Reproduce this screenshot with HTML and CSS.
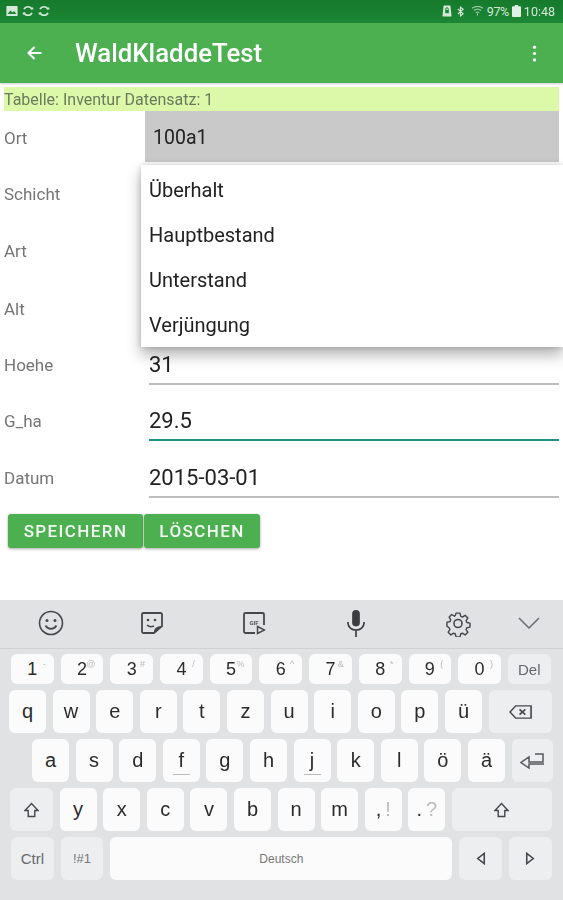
FILE: index.html
```html
<!DOCTYPE html>
<html lang="de">
<head>
<meta charset="utf-8">
<title>WaldKladdeTest</title>
<link rel="stylesheet" href="styles.css">
</head>
<body>
<div class="status">
  <div class="status-left">
    <svg class="si" viewBox="0 0 12 12"><path d="M1 1h10a.6.6 0 0 1 .6.6v8.800a.6.6 0 0 1-.6.6H1a.6.6 0 0 1-.6-.6V1.600A.6.6 0 0 1 1 1z" fill="#d5e8d8"/><path d="M1.500 9l3-3.500 2 2 1.500-1.500L10.500 9z" fill="#1b8432"/></svg>
    <svg class="si" viewBox="0 0 12 12"><path d="M10 4.200A4.500 4.500 0 0 0 2 4.200M2 7.800A4.500 4.500 0 0 0 10 7.800" fill="none" stroke="#d5e8d8" stroke-width="1.700"/><path d="M8.200 4.500h3.300L11 2zM3.800 7.500H.5L1 10z" fill="#d5e8d8"/></svg>
    <svg class="si" viewBox="0 0 12 12"><path d="M10 4.200A4.500 4.500 0 0 0 2 4.200M2 7.800A4.500 4.500 0 0 0 10 7.800" fill="none" stroke="#d5e8d8" stroke-width="1.700"/><path d="M8.200 4.500h3.300L11 2zM3.800 7.500H.5L1 10z" fill="#d5e8d8"/></svg>
  </div>
  <div class="status-right">
    <svg class="si-lock" viewBox="0 0 10 12"><path d="M1.500 1.200a.8.8 0 0 1 .8-.7h5.400a.8.8 0 0 1 .8.700L9.500 11a.6.6 0 0 1-.6.6H1.100a.6.6 0 0 1-.6-.6z" fill="#d5e8d8"/><rect x="3.200" y="5" width="3.600" height="3.200" fill="#1b8432"/><path d="M3.800 5V3.900a1.200 1.200 0 0 1 2.400 0V5" fill="none" stroke="#1b8432"/></svg>
    <svg class="si-bt" viewBox="0 0 8 12"><path d="M1 3.200l6 5.300L4 11V1l3 2.500-6 5.300" fill="none" stroke="#d5e8d8" stroke-width="1.300"/></svg>
    <svg class="si-wifi" viewBox="0 0 14 11"><path d="M1 2.500C4.500-.300 9.500-.300 13 2.500M3 5c2.300-1.800 5.700-1.800 8 0M5 7.400c1.200-.900 2.800-.900 4 0M7 8v2.500" fill="none" stroke="#9cc8a5" stroke-width="1.200"/></svg>
    <span class="pct">97%</span>
    <svg class="si-batt" viewBox="0 0 7 12" preserveAspectRatio="none"><path d="M2.200 0h2.600v1.200H6.300a.7.7 0 0 1 .7.7V11.300a.7.7 0 0 1-.7.7H.7a.7.7 0 0 1-.7-.7V1.900a.7.7 0 0 1 .7-.7H2.200z" fill="#e2efe4"/></svg>
    <span class="time">10:48</span>
  </div>
</div>

<header class="appbar">
  <svg class="back" viewBox="0 0 16 16"><path d="M15 8H2M8 2L2 8l6 6" fill="none" stroke="#fff" stroke-width="2"/></svg>
  <h1 class="title">WaldKladdeTest</h1>
  <svg class="more" viewBox="0 0 4 16"><circle cx="2" cy="2" r="1.500" fill="#fff"/><circle cx="2" cy="8" r="1.500" fill="#fff"/><circle cx="2" cy="14" r="1.500" fill="#fff"/></svg>
</header>

<main class="form">
  <div class="info">Tabelle: Inventur Datensatz: 1</div>
  <div class="row"><span class="label">Ort</span><div class="spinner">100a1</div></div>
  <div class="row"><span class="label">Schicht</span></div>
  <div class="row tall"><span class="label">Art</span></div>
  <div class="row"><span class="label">Alt</span></div>
  <div class="row"><span class="label">Hoehe</span><div class="field">31</div></div>
  <div class="row"><span class="label">G_ha</span><div class="field focus">29.5</div></div>
  <div class="row"><span class="label">Datum</span><div class="field">2015-03-01</div></div>
  <div class="buttons">
    <button class="btn btn-save">SPEICHERN</button>
    <button class="btn btn-del">LÖSCHEN</button>
  </div>
  <ul class="popup">
    <li>Überhalt</li>
    <li>Hauptbestand</li>
    <li>Unterstand</li>
    <li>Verjüngung</li>
  </ul>
</main>

<section class="kbd">
  <div class="tools">
    <svg class="tool t1" viewBox="0 0 26 26"><circle cx="13" cy="13" r="11.500" fill="none" stroke="#45494c" stroke-width="1.600"/><circle cx="9" cy="10.500" r="1.500" fill="#45494c"/><circle cx="17" cy="10.500" r="1.500" fill="#45494c"/><path d="M7.500 15.500c2.500 4.500 8.500 4.500 11 0" fill="none" stroke="#45494c" stroke-width="1.600"/></svg>
    <svg class="tool t2" viewBox="0 0 24 24"><path d="M22 15V3.500A1.500 1.500 0 0 0 20.500 2h-17A1.500 1.500 0 0 0 2 3.500v17A1.500 1.500 0 0 0 3.500 22H14z" fill="none" stroke="#45494c" stroke-width="1.800"/><path d="M22 15l-8 7c-.5-4 2-7 8-7z" fill="#45494c"/><circle cx="8" cy="9" r="1.300" fill="#45494c"/><circle cx="15" cy="9" r="1.300" fill="#45494c"/><path d="M7 14c2 2 4 2.200 7 1" fill="none" stroke="#45494c" stroke-width="1.500"/></svg>
    <svg class="tool t3" viewBox="0 0 24 24"><path d="M13 22H3.500A1.500 1.500 0 0 1 2 20.500v-17A1.500 1.500 0 0 1 3.500 2h17A1.500 1.500 0 0 1 22 3.500V14" fill="none" stroke="#45494c" stroke-width="1.800"/><path d="M15.500 15.500l7 3.500-7 3.500z" fill="none" stroke="#45494c" stroke-width="1.500"/><text x="12" y="14" text-anchor="middle" class="gif">GIF</text></svg>
    <svg class="tool t4" viewBox="0 0 20 28"><rect x="6" y="0" width="8" height="17" rx="4" fill="#3a3d40"/><path d="M1.500 12.500c0 11 17 11 17 0M10 21v7" fill="none" stroke="#3a3d40" stroke-width="1.700"/></svg>
    <svg class="tool t5" viewBox="0 0 26 26"><path d="M10.800 1.500h4.400l.7 3.400 2 .9 3-1.900 3 3.100-1.900 2.900.9 2 3.400.7v4.400l-3.400.7-.9 2 1.900 2.900-3 3.100-3-1.900-2 .9-.7 3.400h-4.400l-.7-3.400-2-.9-3 1.900-3-3.100 1.900-2.900-.9-2L.700 16v-4.400l3.400-.7.9-2L3.100 6 6 3 9 4.900l1.100-.9z" transform="translate(1.300 1.300) scale(.9)" fill="none" stroke="#45494c" stroke-width="1.600" stroke-linejoin="round"/><circle cx="13" cy="13" r="4" fill="none" stroke="#45494c" stroke-width="1.600"/></svg>
    <svg class="tool t6" viewBox="0 0 22 12"><path d="M1 1l10 10L21 1" fill="none" stroke="#6a6e72" stroke-width="1.500"/></svg>
  </div>

  <div class="krow r1">
    <div class="key num">1<sup>-</sup></div>
    <div class="key num">2<sup>@</sup></div>
    <div class="key num">3<sup>#</sup></div>
    <div class="key num">4<sup>/</sup></div>
    <div class="key num">5<sup>%</sup></div>
    <div class="key num">6<sup>^</sup></div>
    <div class="key num">7<sup>&amp;</sup></div>
    <div class="key num">8<sup>*</sup></div>
    <div class="key num">9<sup>(</sup></div>
    <div class="key num">0<sup>)</sup></div>
    <div class="key num fn small-label">Del</div>
  </div>
  <div class="krow r2">
    <div class="key">q</div><div class="key">w</div><div class="key">e</div><div class="key">r</div><div class="key">t</div><div class="key">z</div><div class="key">u</div><div class="key">i</div><div class="key">o</div><div class="key">p</div><div class="key">ü</div>
    <div class="key fn wide-bs"><svg class="ico bs" viewBox="0 0 24 16" preserveAspectRatio="none"><path d="M7 1h16v14H7L1 8z" fill="none" stroke="#45494c" stroke-width="1.700"/><path d="M11 5l6 6M17 5l-6 6" stroke="#45494c" stroke-width="1.700"/></svg></div>
  </div>
  <div class="krow r3">
    <div class="key">a</div><div class="key">s</div><div class="key">d</div><div class="key under">f</div><div class="key">g</div><div class="key">h</div><div class="key under">j</div><div class="key">k</div><div class="key">l</div><div class="key">ö</div><div class="key">ä</div>
    <div class="key fn wide-en"><svg class="ico en" viewBox="0 0 24 16"><path d="M15 1h8v8H9V4L1 9.500 9 15v-4h15" fill="none" stroke="#55595c" stroke-width="1.500"/></svg></div>
  </div>
  <div class="krow r4">
    <div class="key fn wide-sh"><svg class="ico sh" viewBox="0 0 16 16"><path d="M8 1l7 7.500h-3.500V15h-7V8.500H1z" fill="none" stroke="#45494c" stroke-width="1.500"/></svg></div>
    <div class="key">y</div><div class="key">x</div><div class="key">c</div><div class="key">v</div><div class="key">b</div><div class="key">n</div><div class="key">m</div>
    <div class="key">,<span class="alt">!</span></div><div class="key">.<span class="alt">?</span></div>
    <div class="key fn wide-sh2"><svg class="ico sh" viewBox="0 0 16 16"><path d="M8 1l7 7.500h-3.500V15h-7V8.500H1z" fill="none" stroke="#45494c" stroke-width="1.500"/></svg></div>
  </div>
  <div class="krow r5">
    <div class="key fn wide-c small-label">Ctrl</div>
    <div class="key fn wide-c sym">!#1</div>
    <div class="key space">Deutsch</div>
    <div class="key fn wide-c"><svg class="ico ar" viewBox="0 0 10 14"><path d="M8.500 1.500v11L1.500 7z" fill="none" stroke="#45494c" stroke-width="1.700"/></svg></div>
    <div class="key fn wide-c"><svg class="ico ar" viewBox="0 0 10 14"><path d="M1.500 1.500v11L8.500 7z" fill="none" stroke="#45494c" stroke-width="1.700"/></svg></div>
  </div>
</section>
</body>
</html>
```

FILE: styles.css
```css
* { box-sizing: border-box; }
html, body { margin: 0; padding: 0; }
body {
  width: 563px;
  height: 900px;
  overflow: hidden;
  display: flex;
  flex-direction: column;
  background: #fff;
  font-family: Roboto, "Liberation Sans", sans-serif;
  filter: blur(.4px);
}

.status {
  height: 23px;
  flex: none;
  display: flex;
  align-items: center;
  justify-content: space-between;
  padding: 0 8px 1px 6px;
  background: linear-gradient(#167a2d, #1c8734);
  color: #d5e8d8;
}
.status-left, .status-right { display: flex; align-items: center; }
.status-left { gap: 4px; }
.si { width: 12px; height: 12px; display: block; }
.si-lock { width: 10px; height: 12px; margin-right: 5px; display: block; }
.si-bt { width: 7px; height: 11px; margin-right: 7px; display: block; }
.si-wifi { width: 13px; height: 10px; margin-right: 3px; display: block; }
.si-batt { width: 9px; height: 12px; margin: 0 3px 0 3px; display: block; }
.pct { font-size: 12.500px; letter-spacing: -.4px; }
.time { font-size: 12.500px; }

.appbar {
  height: 60px;
  flex: none;
  display: flex;
  align-items: center;
  padding: 0 26px 0 26px;
  background: #4caf50;
  box-shadow: 0 1px 2px rgba(0,0,0,.2);
  position: relative;
  z-index: 1;
}
.back { width: 17px; height: 16px; display: block; }
.title {
  margin: 0 0 0 32px;
  flex: 1;
  font-size: 25.800px;
  font-weight: 500;
  color: #fff;
}
.more { width: 5px; height: 17px; display: block; }

.form { flex: 1; position: relative; padding-top: 4px; }
.info {
  margin: 0 4px;
  height: 24px;
  line-height: 25px;
  background: #dcf8a9;
  font-size: 16px;
  color: #6b7a5d;
}
.row {
  height: 56.300px;
  display: grid;
  grid-template-columns: 145px 414px;
  align-items: start;
  position: relative;
}
.row.tall { height: 58.300px; }
.label {
  padding: 17px 0 0 4px;
  font-size: 17px;
  line-height: 20px;
  color: #757575;
}
.spinner {
  height: 51px;
  line-height: 54px;
  padding-left: 8px;
  background: #c9c9c9;
  font-size: 19.500px;
  color: #222;
}
.field {
  margin: 0 0 0 4px;
  height: 47px;
  padding-top: 12px;
  line-height: 30px;
  font-size: 22px;
  color: #212121;
  border-bottom: 2px solid #bdbdbd;
}
.field.focus { border-bottom-color: #1e9384; }

.buttons { display: flex; padding: 7px 0 0 8px; gap: 1px; }
.btn {
  height: 34px;
  border: 0;
  border-radius: 3px;
  background: #4caf50;
  color: #f2faf2;
  font-family: inherit;
  font-size: 17px;
  font-weight: 500;
  letter-spacing: 1.400px;
  box-shadow: 0 1px 3px rgba(0,0,0,.35);
  padding: 0;
}
.btn-save { width: 135px; }
.btn-del { width: 116px; }

.popup {
  position: absolute;
  left: 141px;
  top: 82px;
  width: 422px;
  height: 182px;
  margin: 0;
  padding: 3px 0;
  list-style: none;
  background: #fff;
  box-shadow: 0 8px 14px rgba(0,0,0,.3), 0 0 6px rgba(0,0,0,.18);
}
.popup li {
  height: 45px;
  line-height: 45px;
  padding-left: 8px;
  font-size: 20px;
  color: #212121;
}

.kbd {
  height: 300px;
  flex: none;
  background: #e0e2e4;
  display: flex;
  flex-direction: column;
}
.tools {
  height: 49px;
  flex: none;
  position: relative;
  padding-bottom: 2px;
  border-bottom: 1px solid #cfd1d3;
  display: grid;
  grid-template-columns: 102px 100px 104px 100px 104px 38px;
  align-items: center;
  justify-items: center;
}
.tool { display: block; }
.t1 { width: 26px; height: 26px; }
.t2 { width: 24px; height: 24px; }
.t3 { width: 24px; height: 24px; }
.t4 { width: 20px; height: 27px; }
.t5 { width: 26px; height: 27px; }
.t6 { width: 22px; height: 12px; }
.gif { font-family: Roboto, sans-serif; font-size: 6px; font-weight: 700; fill: #555; }

.krow { display: flex; flex: none; }
.key {
  flex: none;
  display: flex;
  align-items: center;
  justify-content: center;
  width: 37px;
  background: #fbfbfb;
  border-radius: 6px;
  font-family: "Liberation Sans", Arial, sans-serif;
  font-size: 20px;
  color: #2b2b2b;
  position: relative;
}
.key.fn { background: #eceef0; color: #66696c; }
.r1 { height: 30px; margin-top: 5px; padding-left: 11px; gap: 7px; }
.r1 .key { width: 42.700px; font-size: 18px; }
.r1 .key sup { position: absolute; right: 8px; top: 5px; font-size: 9px; color: #bbb; line-height: 10px; }
.small-label { font-size: 15px !important; }
.r2 { height: 43px; margin-top: 6px; padding-left: 9px; gap: 6.600px; }
.r3 { height: 43px; margin-top: 6px; padding-left: 32px; gap: 6.600px; }
.r4 { height: 43px; margin-top: 6px; padding-left: 10px; gap: 6.600px; }
.r5 { height: 43px; margin-top: 6px; padding-left: 11px; gap: 7px; }
.wide-bs { width: 63px; }
.wide-en { width: 41px; }
.wide-sh { width: 43px; }
.wide-sh2 { width: 100px; }
.wide-c { width: 42.700px; }
.sym { font-size: 13px; color: #777 !important; }
.space { width: 342px; font-size: 12px; color: #777; }
.alt { color: #bbb; margin-left: 4px; }
.under::after {
  content: "";
  position: absolute;
  left: 10px;
  right: 10px;
  bottom: 7px;
  height: 1px;
  background: #bbb;
}
.ico { display: block; }
.bs { width: 23px; height: 14px; }
.en { width: 24px; height: 16px; }
.sh { width: 15px; height: 16px; }
.ar { width: 10px; height: 13px; }
```
